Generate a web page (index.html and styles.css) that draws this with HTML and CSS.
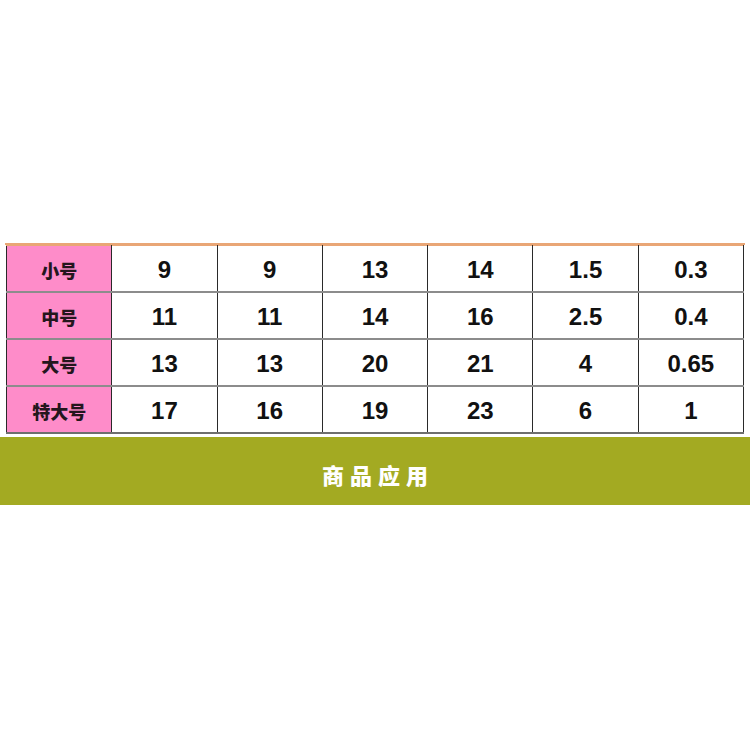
FILE: index.html
```html
<!DOCTYPE html>
<html lang="zh">
<head>
<meta charset="utf-8">
<link rel="stylesheet" href="styles.css">
</head>
<body>
<div class="page">
  <div class="topline"></div>
  <table class="sizes">
    <tr><th>小号</th><td>9</td><td>9</td><td>13</td><td>14</td><td>1.5</td><td>0.3</td></tr>
    <tr><th>中号</th><td>11</td><td>11</td><td>14</td><td>16</td><td>2.5</td><td>0.4</td></tr>
    <tr><th>大号</th><td>13</td><td>13</td><td>20</td><td>21</td><td>4</td><td>0.65</td></tr>
    <tr><th>特大号</th><td>17</td><td>16</td><td>19</td><td>23</td><td>6</td><td>1</td></tr>
  </table>
  <div class="band">商品应用</div>
</div>
</body>
</html>
```
FILE: styles.css
```css
html, body {
  margin: 0;
  padding: 0;
  background: #ffffff;
}
.page {
  width: 750px;
  height: 750px;
  padding-top: 243px;
  box-sizing: border-box;
  font-family: "Liberation Sans", "Noto Sans CJK SC", sans-serif;
}
.topline {
  height: 2px;
  margin: 0 5px;
  background: #e9a676;
}
.sizes {
  margin-left: 6px;
  width: 738px;
  border-collapse: collapse;
  table-layout: fixed;
}
.sizes th,
.sizes td {
  height: 43px;
  padding: 2px 0 0 0;
  border-left: 1px solid #2a2a2a;
  border-right: 1px solid #2a2a2a;
  border-top: 2px solid #8c8c8c;
  border-bottom: 2px solid #8c8c8c;
  text-align: center;
  vertical-align: middle;
}
.sizes tr:first-child th,
.sizes tr:first-child td {
  border-top: 1px solid #e9a676;
}
.sizes tr:last-child th,
.sizes tr:last-child td {
  border-bottom: 2px solid #6e6e6e;
}
.sizes th {
  background: #fe8cc9;
  color: #24161d;
  font-family: "Noto Sans CJK SC", sans-serif;
  font-weight: 900;
  font-size: 18px;
}
.sizes td {
  color: #111111;
  font-weight: bold;
  font-size: 24px;
}
.band {
  margin-top: 3px;
  height: 68px;
  box-sizing: border-box;
  padding: 6px 0 0 6px;
  background: #a3aa22;
  color: #ffffff;
  font-family: "Noto Sans CJK SC", sans-serif;
  font-weight: 900;
  font-size: 22px;
  letter-spacing: 6px;
  display: flex;
  align-items: center;
  justify-content: center;
}
```
